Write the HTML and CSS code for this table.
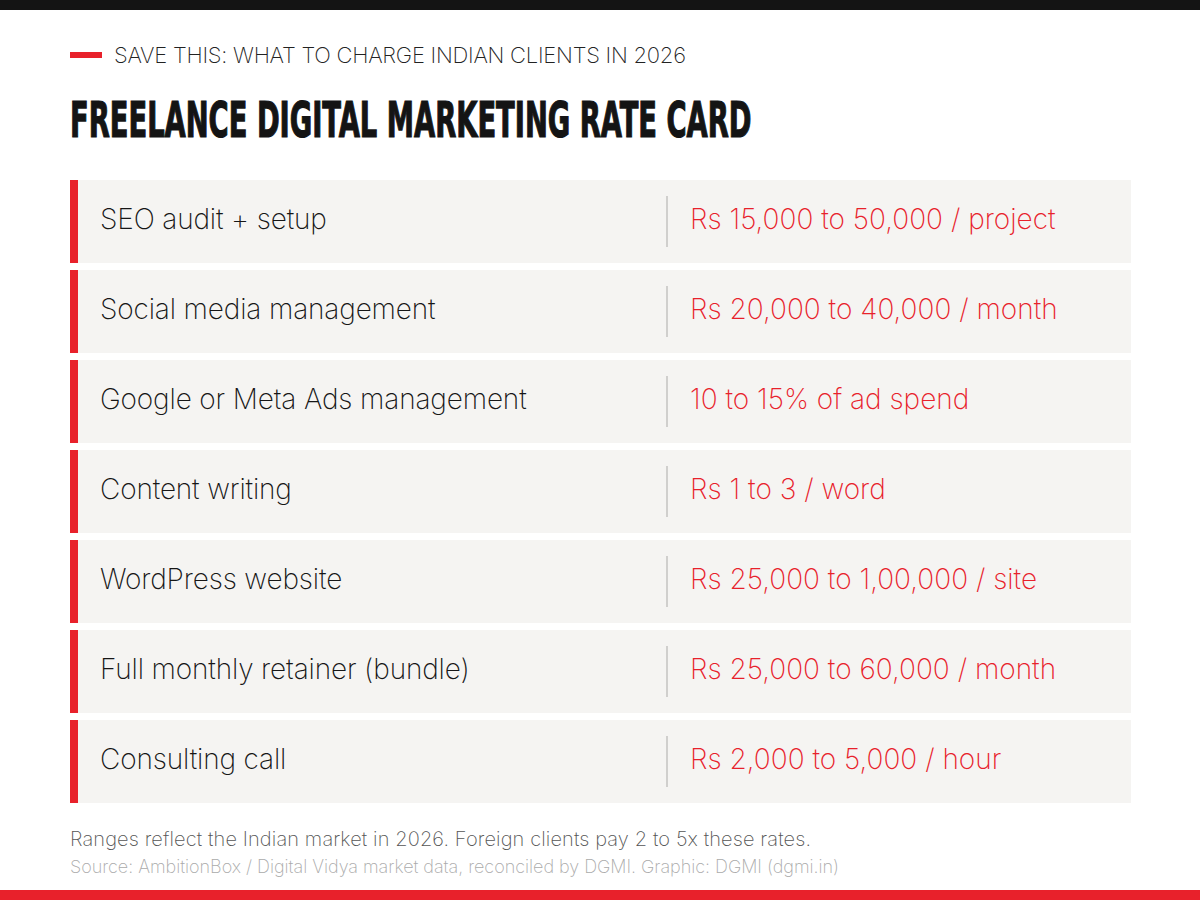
FILE: index.html
```html
<!DOCTYPE html>
<html lang="en">
<head>
<meta charset="utf-8">
<title>Freelance Digital Marketing Rate Card</title>
<link rel="stylesheet" href="styles.css">
</head>
<body>
<div class="page">
  <div class="topbar"></div>
  <main class="content">
    <div class="kicker"><span class="dash"></span><span class="kicker-text">SAVE THIS: WHAT TO CHARGE INDIAN CLIENTS IN 2026</span></div>
    <h1 class="title">FREELANCE DIGITAL MARKETING RATE CARD</h1>
    <div class="rows">
      <div class="row"><div class="service">SEO audit + setup</div><div class="rate">Rs 15,000 to 50,000 / project</div></div>
      <div class="row"><div class="service">Social media management</div><div class="rate">Rs 20,000 to 40,000 / month</div></div>
      <div class="row"><div class="service">Google or Meta Ads management</div><div class="rate">10 to 15% of ad spend</div></div>
      <div class="row"><div class="service">Content writing</div><div class="rate">Rs 1 to 3 / word</div></div>
      <div class="row"><div class="service">WordPress website</div><div class="rate">Rs 25,000 to 1,00,000 / site</div></div>
      <div class="row"><div class="service">Full monthly retainer (bundle)</div><div class="rate">Rs 25,000 to 60,000 / month</div></div>
      <div class="row"><div class="service">Consulting call</div><div class="rate">Rs 2,000 to 5,000 / hour</div></div>
    </div>
    <p class="note">Ranges reflect the Indian market in 2026. Foreign clients pay 2 to 5x these rates.</p>
    <p class="source">Source: AmbitionBox / Digital Vidya market data, reconciled by DGMI. Graphic: DGMI (dgmi.in)</p>
  </main>
  <div class="bottombar"></div>
</div>
</body>
</html>
```
FILE: styles.css
```css
* { box-sizing: border-box; }
html, body { margin: 0; padding: 0; background: #ffffff; }
body { font-family: Inter, "Noto Sans", sans-serif; color: #161616; }
.page { width: 1200px; height: 900px; display: flex; flex-direction: column; }
.topbar { height: 10px; background: #141414; flex: none; }
.bottombar { height: 10px; background: #e8212b; flex: none; }
.content { flex: 1; padding: 32px 69px 0 70px; }
.kicker { display: flex; align-items: center; gap: 12px; height: 26px; }
.dash { width: 32px; height: 6px; background: #e8212b; flex: none; }
.kicker-text { font-size: 22px; font-weight: 200; letter-spacing: -0.25px; color: #222; line-height: 26px; }
.title { margin: 26px 0 0; font-family: "DejaVu Sans Condensed", "DejaVu Sans", sans-serif; font-weight: 700; font-size: 50px; line-height: 52px; letter-spacing: 0; color: #141414; -webkit-text-stroke: 1.2px #141414; transform: scaleX(0.608); transform-origin: left; white-space: nowrap; }
.rows { margin-top: 34px; display: flex; flex-direction: column; gap: 7px; }
.row { height: 83px; display: flex; align-items: center; background: #f5f4f2; border-left: 8px solid #e8212b; }
.service { width: 588px; padding-left: 22px; font-size: 28px; font-weight: 200; letter-spacing: -0.15px; color: #161616; margin-top: -6px; }
.rate { flex: 1; border-left: 2px solid #d0cfcd; height: 51px; display: flex; align-items: center; padding-left: 22px; padding-bottom: 6px; font-size: 28px; font-weight: 200; letter-spacing: 0; color: #e8212b; }
.note { margin: 22px 0 0; font-size: 20px; font-weight: 200; letter-spacing: 0.12px; color: #555; line-height: 28px; }
.source { margin: 0; font-size: 18px; font-weight: 200; letter-spacing: -0.03px; color: #aaa; line-height: 28px; }
```
